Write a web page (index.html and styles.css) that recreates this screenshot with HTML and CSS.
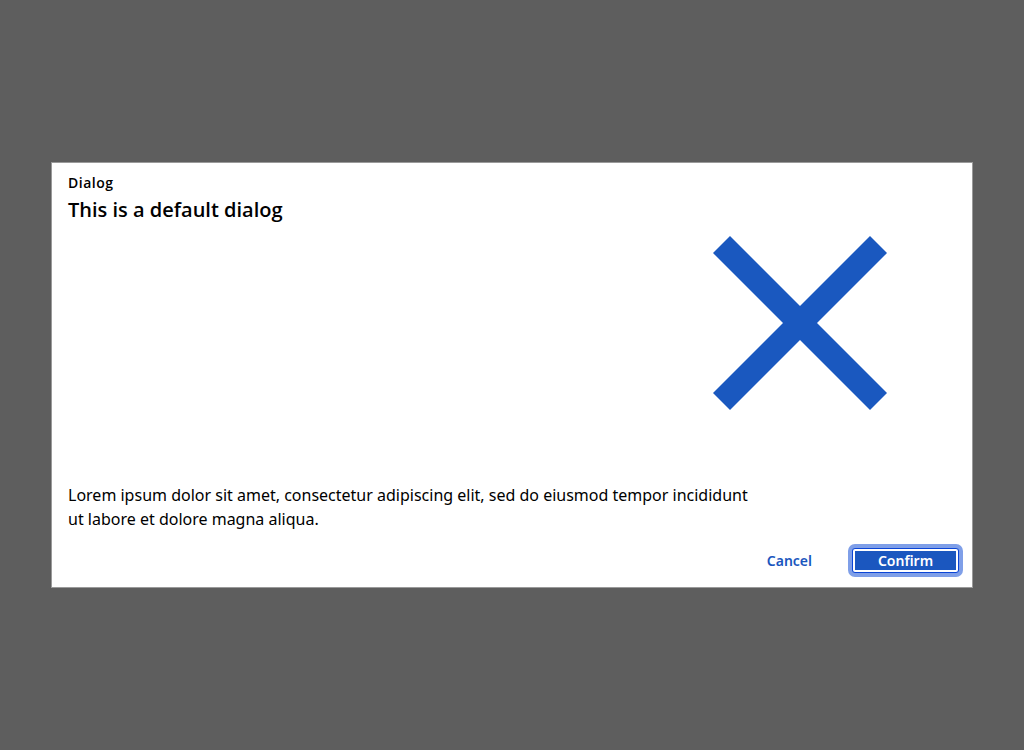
FILE: index.html
```html
<!DOCTYPE html>
<html lang="en">
<head>
<meta charset="utf-8">
<title>Dialog</title>
<link rel="stylesheet" href="styles.css">
</head>
<body>
<div class="backdrop">
  <section class="dialog">
    <div class="kicker">Dialog</div>
    <h1 class="title">This is a default dialog</h1>
    <div class="hero">
      <svg class="hero-icon" width="174" height="174" viewBox="0 0 174 174" aria-hidden="true">
        <polygon fill="#1a58bf" points="0,17 17,0 87,70 157,0 174,17 104,87 174,157 157,174 87,104 17,174 0,157 70,87"/>
      </svg>
    </div>
    <p class="body">Lorem ipsum dolor sit amet, consectetur adipiscing elit, sed do eiusmod tempor incididunt ut labore et dolore magna aliqua.</p>
    <div class="footer">
      <button class="btn btn-cancel" type="button">Cancel</button>
      <button class="btn btn-confirm" type="button">Confirm</button>
    </div>
  </section>
</div>
</body>
</html>
```

FILE: styles.css
```css
html, body {
  margin: 0;
  padding: 0;
  height: 100%;
}
body {
  background: #5e5e5e;
  font-family: "Noto Sans", "Open Sans", sans-serif;
  color: #000;
}
.backdrop {
  height: 750px;
  display: flex;
  align-items: center;
  justify-content: center;
}
.dialog {
  box-sizing: border-box;
  width: 922px;
  height: 426px;
  background: #fff;
  border: 1px solid #9a9a9a;
  padding: 10px 13px 0 16px;
  display: flex;
  flex-direction: column;
}
.kicker {
  font-family: "Open Sans", "Noto Sans", sans-serif;
  font-size: 14px;
  font-weight: 600;
  line-height: 20px;
  letter-spacing: 0.5px;
}
.title {
  margin: 3px 0 0 0;
  font-family: "Open Sans", "Noto Sans", sans-serif;
  font-size: 20px;
  font-weight: 600;
  line-height: 28px;
}
.hero {
  margin-top: 12px;
  padding-left: 645px;
  height: 174px;
}
.hero-icon {
  display: block;
}
.body {
  margin: 73px 0 0 0;
  max-width: 692px;
  font-size: 16px;
  line-height: 24px;
}
.footer {
  margin-top: 17px;
  display: flex;
  justify-content: flex-end;
  align-items: center;
}
.btn {
  font-family: "Noto Sans", "Open Sans", sans-serif;
  font-size: 14px;
  line-height: 25px;
  height: 25px;
  border: 0;
  padding: 0;
  background: transparent;
  cursor: pointer;
}
.btn-cancel {
  color: #1a56be;
  font-weight: 600;
  padding: 0 16px;
  margin-right: 24px;
}
.btn-confirm {
  width: 107px;
  color: #fff;
  font-weight: 600;
  background: #1b57bf;
  border-radius: 3px;
  box-shadow: inset 0 0 0 1px #0b45d6, inset 0 0 0 3px #fff, 0 0 0 4px #7f9fe8;
}
```
